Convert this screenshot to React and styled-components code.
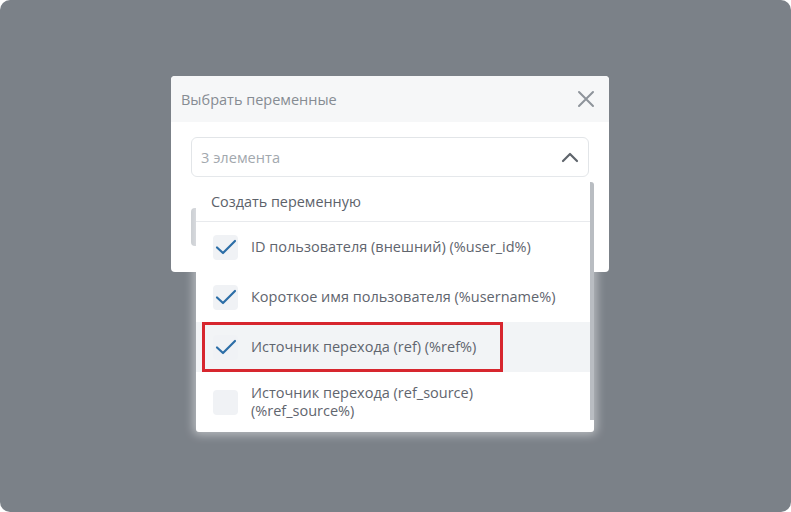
import React from "react";
import styled, { createGlobalStyle } from "styled-components";

const GlobalStyle = createGlobalStyle`
  html, body {
    margin: 0;
    padding: 0;
    background: #ffffff;
    font-family: "Open Sans", "Noto Sans", sans-serif;
  }
`;

const variables = [
  { id: "user_id", label: "ID пользователя (внешний) (%user_id%)", checked: true },
  { id: "username", label: "Короткое имя пользователя (%username%)", checked: true },
  { id: "ref", label: "Источник перехода (ref) (%ref%)", checked: true, active: true, marked: true },
  { id: "ref_source", label: "Источник перехода (ref_source) (%ref_source%)", checked: false },
];

const Screen = styled.div`
  width: 791px;
  height: 512px;
  box-sizing: border-box;
  border-radius: 10px;
  background: #7b8188;
  padding-top: 76px;
  padding-left: 171px;
  overflow: hidden;
`;

const Modal = styled.div`
  width: 438px;
  background: #ffffff;
  border-radius: 4px;
`;

const Header = styled.div`
  display: flex;
  align-items: center;
  justify-content: space-between;
  height: 46px;
  padding: 0 14px 0 10px;
  background: #f6f7f8;
  border-radius: 4px 4px 0 0;
`;

const Title = styled.span`
  font-size: 14.5px;
  color: #868c93;
`;

const CloseButton = styled.button`
  display: flex;
  padding: 0;
  border: none;
  background: transparent;
`;

const Body = styled.div`
  padding: 15px 20px 26px;
`;

const SelectWrap = styled.div`
  position: relative;
`;

const Select = styled.div`
  display: flex;
  align-items: center;
  justify-content: space-between;
  height: 40px;
  box-sizing: border-box;
  padding: 0 9px 0 9px;
  border: 1px solid #e2e5e8;
  border-radius: 6px;
  font-size: 14.6px;
  color: #a2a8ae;
`;

const SaveButton = styled.div`
  margin-top: 31px;
  height: 38px;
  width: 120px;
  border-radius: 4px;
  background: #c3c7cc;
`;

const Dropdown = styled.div`
  position: absolute;
  top: 45px;
  left: 5px;
  width: 398px;
  background: #ffffff;
  border-radius: 3px;
  box-shadow: 0 0 10px 3px rgba(255, 255, 255, 0.45);
  overflow: hidden;
  z-index: 10;
`;

const Scrollbar = styled.div`
  position: absolute;
  top: 0;
  right: 0;
  width: 4px;
  height: 238px;
  background: #b9bdc2;
`;

const CreateItem = styled.div`
  height: 40px;
  display: flex;
  align-items: center;
  padding-left: 15px;
  font-size: 14.4px;
  color: #5c626a;
  border-bottom: 1px solid #e8eaed;
  box-sizing: border-box;
`;

const Option = styled.div`
  position: relative;
  display: flex;
  align-items: center;
  gap: 13px;
  min-height: 50px;
  padding: 12px 30px 12px 17px;
  box-sizing: border-box;
  margin-right: 4px;
  background: ${(p) => (p.$active ? "#f2f4f6" : "transparent")};
`;

const Checkbox = styled.span`
  flex: none;
  display: flex;
  align-items: center;
  justify-content: center;
  width: 25px;
  height: 25px;
  border-radius: 4px;
  background: #f0f2f5;
`;

const OptionText = styled.span`
  font-size: 14.5px;
  line-height: 18px;
  color: #5f656e;
`;

const Marker = styled.span`
  position: absolute;
  left: 6px;
  top: 0;
  width: 301px;
  height: 50px;
  box-sizing: border-box;
  border: 3px solid #d7262e;
  pointer-events: none;
`;

const CheckIcon = () => (
  <svg width="22" height="16" viewBox="0 0 22 16" fill="none">
    <path d="M2 8.5 L8 14 L20 2" stroke="#2c6ea7" strokeWidth="2.2" strokeLinecap="round" strokeLinejoin="round" />
  </svg>
);

const ChevronUp = () => (
  <svg width="18" height="12" viewBox="0 0 18 12" fill="none">
    <path d="M2 10 L9 3 L16 10" stroke="#5f656c" strokeWidth="2.2" strokeLinecap="round" strokeLinejoin="round" />
  </svg>
);

const CloseIcon = () => (
  <svg width="18" height="18" viewBox="0 0 18 18" fill="none">
    <path d="M2 2 L16 16 M16 2 L2 16" stroke="#8e949b" strokeWidth="2" strokeLinecap="round" />
  </svg>
);

const App = () => {
  return (
    <>
      <GlobalStyle />
      <Screen>
        <Modal>
          <Header>
            <Title>Выбрать переменные</Title>
            <CloseButton>
              <CloseIcon />
            </CloseButton>
          </Header>
          <Body>
            <SelectWrap>
              <Select>
                <span>3 элемента</span>
                <ChevronUp />
              </Select>
              <Dropdown>
                <CreateItem>Создать переменную</CreateItem>
                {variables.map((v) => (
                  <Option key={v.id} $active={v.active}>
                    <Checkbox>{v.checked && <CheckIcon />}</Checkbox>
                    <OptionText>{v.label}</OptionText>
                    {v.marked && <Marker />}
                  </Option>
                ))}
                <Scrollbar />
              </Dropdown>
            </SelectWrap>
            <SaveButton />
          </Body>
        </Modal>
      </Screen>
    </>
  );
};

export default App;
